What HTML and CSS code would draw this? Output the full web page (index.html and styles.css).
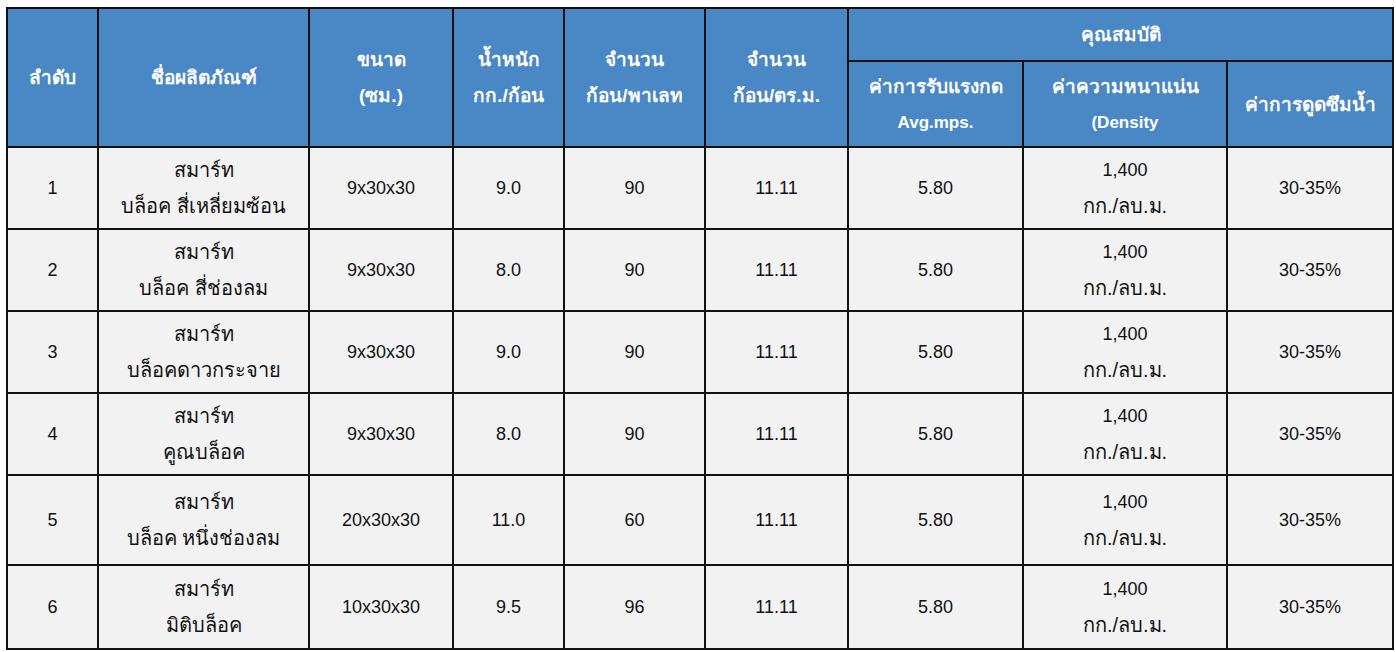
FILE: index.html
```html
<!DOCTYPE html>
<html lang="th">
<head>
<meta charset="utf-8">
<link rel="stylesheet" href="styles.css">
</head>
<body>
<table class="spec">
  <colgroup>
    <col class="c1"><col class="c2"><col class="c3"><col class="c4"><col class="c5"><col class="c6"><col class="c7"><col class="c8"><col class="c9">
  </colgroup>
  <thead>
    <tr class="h1">
      <th rowspan="2">ลำดับ</th>
      <th rowspan="2">ชื่อผลิตภัณฑ์</th>
      <th rowspan="2">ขนาด<br>(ซม.)</th>
      <th rowspan="2">น้ำหนัก<br>กก./ก้อน</th>
      <th rowspan="2">จำนวน<br>ก้อน/พาเลท</th>
      <th rowspan="2">จำนวน<br>ก้อน/ตร.ม.</th>
      <th colspan="3" class="group">คุณสมบัติ</th>
    </tr>
    <tr class="h2">
      <th>ค่าการรับแรงกด<br><span class="en">Avg.mps.</span></th>
      <th>ค่าความหนาแน่น<br><span class="en">(Density</span></th>
      <th>ค่าการดูดซึมน้ำ</th>
    </tr>
  </thead>
  <tbody>
    <tr class="r">
      <td>1</td><td class="t">สมาร์ท<br>บล็อค สี่เหลี่ยมซ้อน</td><td>9x30x30</td><td>9.0</td><td>90</td><td>11.11</td><td>5.80</td><td>1,400<br><span class="t">กก./ลบ.ม.</span></td><td>30-35%</td>
    </tr>
    <tr class="r">
      <td>2</td><td class="t">สมาร์ท<br>บล็อค สี่ช่องลม</td><td>9x30x30</td><td>8.0</td><td>90</td><td>11.11</td><td>5.80</td><td>1,400<br><span class="t">กก./ลบ.ม.</span></td><td>30-35%</td>
    </tr>
    <tr class="r">
      <td>3</td><td class="t">สมาร์ท<br>บล็อคดาวกระจาย</td><td>9x30x30</td><td>9.0</td><td>90</td><td>11.11</td><td>5.80</td><td>1,400<br><span class="t">กก./ลบ.ม.</span></td><td>30-35%</td>
    </tr>
    <tr class="r">
      <td>4</td><td class="t">สมาร์ท<br>คูณบล็อค</td><td>9x30x30</td><td>8.0</td><td>90</td><td>11.11</td><td>5.80</td><td>1,400<br><span class="t">กก./ลบ.ม.</span></td><td>30-35%</td>
    </tr>
    <tr class="r tall">
      <td>5</td><td class="t">สมาร์ท<br>บล็อค หนึ่งช่องลม</td><td>20x30x30</td><td>11.0</td><td>60</td><td>11.11</td><td>5.80</td><td>1,400<br><span class="t">กก./ลบ.ม.</span></td><td>30-35%</td>
    </tr>
    <tr class="r last">
      <td>6</td><td class="t">สมาร์ท<br>มิติบล็อค</td><td>10x30x30</td><td>9.5</td><td>96</td><td>11.11</td><td>5.80</td><td>1,400<br><span class="t">กก./ลบ.ม.</span></td><td>30-35%</td>
    </tr>
  </tbody>
</table>
</body>
</html>
```
FILE: styles.css
```css
html, body {
  margin: 0;
  padding: 0;
  background: #ffffff;
}
body {
  padding: 7px 0 0 6px;
  font-family: "Liberation Sans", Arial, "Noto Sans", sans-serif;
}
.spec {
  border-collapse: collapse;
  table-layout: fixed;
  width: 1386px;
}
.c1 { width: 91px; }
.c2 { width: 211px; }
.c3 { width: 144px; }
.c4 { width: 111px; }
.c5 { width: 141px; }
.c6 { width: 143px; }
.c7 { width: 175px; }
.c8 { width: 204px; }
.c9 { width: 166px; }
.spec th, .spec td {
  border: 2px solid #111111;
  padding: 0;
  text-align: center;
  vertical-align: middle;
  line-height: 36px;
}
.spec th {
  background: #4a87c5;
  color: #ffffff;
  font-weight: bold;
  font-size: 19px;
}
.spec td {
  background: #f2f2f2;
  color: #111111;
  font-size: 18px;
}
.spec td.t, .spec .t {
  font-size: 20px;
}
.h1 { height: 53px; }
.h2 { height: 86px; }
.spec .h2 th { line-height: 35px; }
.en { font-size: 17px; }
.r { height: 82px; }
.r.tall { height: 90px; }
.r.last { height: 84px; }
```
